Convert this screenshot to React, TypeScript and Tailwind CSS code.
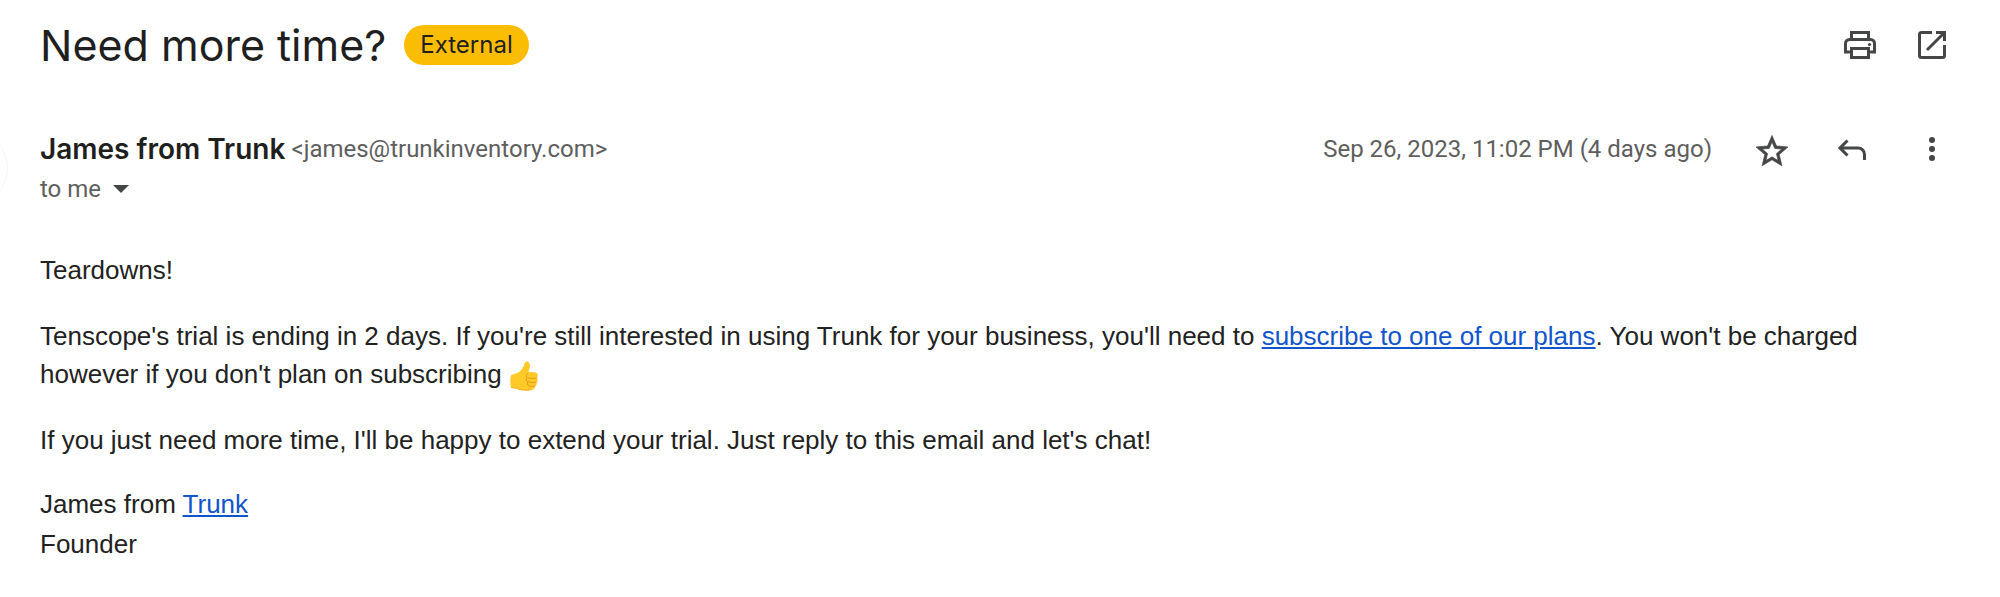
import type { ReactNode } from 'react';

interface IconButtonProps {
  label: string;
  children: ReactNode;
}

function IconButton({ label, children }: IconButtonProps) {
  return (
    <button type="button" aria-label={label} className="size-10 shrink-0 text-[#444746]">
      <svg viewBox="0 0 40 40" className="size-10" fill="none" stroke="currentColor" strokeWidth="3">
        {children}
      </svg>
    </button>
  );
}

function ThumbsUp() {
  return (
    <svg viewBox="0 0 28 30" role="img" aria-label="thumbs up" className="ml-px inline-block h-[30px] w-7 align-[-8px]">
      <path
        d="M1 14.500c2-1.500 4.500-1.500 6.500-2.500 3-1.800 5.500-4.500 6.700-8.200C14.600 1.500 15.500.300 17.200.500c2.300.300 3.100 2.800 2.600 5.400-.400 2.200-1.100 3.700-1.300 5.200l6 .200c2.300.200 3.400 1.500 3.200 3.200-.100.900-.600 1.500-1.100 1.900 1.600 1.300 1.500 3.600-.100 4.700.700 1.600 0 3.400-1.500 4 .300 1.900-.900 3.400-3.300 3.700-3.800.500-8.300.500-11.700-.300-2.500-.600-4.300-1.800-9-1.900C.200 23 .200 17 1 14.500z"
        fill="#ffc928"
      />
      <path
        d="M27 16.500c-.800.800-2.300 1-4.300.9-2.300-.100-4.200.100-4.800-.600M26.400 21c-1.500.8-5.500.9-8-.1M24.900 25c-1.500.6-4.400.600-6.200-.200M17.800 12.500c-1.900 1.200-2 3.200-.600 4.300-1.300 1.200-1 3.200.6 4-1 1.400-.500 3 .8 4"
        fill="none"
        stroke="#e89a1c"
        strokeWidth="1"
        strokeLinecap="round"
      />
      <path d="M1 26.600c4.700.1 6.500 1.300 9 1.900 3.400.8 7.900.8 11.700.3" fill="none" stroke="#f3a81d" strokeWidth="1" />
    </svg>
  );
}

export default function App() {
  return (
    <main className="relative min-h-screen overflow-hidden bg-white pt-[25px] pr-12 pb-6 pl-10 font-['Inter',sans-serif] text-[#1f1f1f]">
      <div className="flex items-center justify-between">
        <div className="flex items-center gap-[18px]">
          <h1 className="text-[43px] leading-10">Need more time?</h1>
          <span className="rounded-full bg-[#fbbc04] px-4 text-2xl leading-10">External</span>
        </div>
        <div className="flex gap-8">
          <IconButton label="Print all">
            <path d="M11.500 14.500v-7h17v7M11.500 27H5.500v-8.500a4 4 0 0 1 4-4h21a4 4 0 0 1 4 4V27h-6M11.500 23.500h17v9h-17z" />
            <circle cx="29.500" cy="19.500" r="1.600" fill="currentColor" stroke="none" />
          </IconButton>
          <IconButton label="In new window">
            <path d="M20 7.500H9.500a2 2 0 0 0-2 2v21a2 2 0 0 0 2 2h21a2 2 0 0 0 2-2V20M24 7.500h8.500V16M32 8 15 25" />
          </IconButton>
        </div>
      </div>

      <header className="mt-16 flex items-start justify-between">
        <div
          className="absolute top-32 -left-[72px] size-20 rounded-full border border-gray-100"
          aria-hidden="true"
        />
        <div>
          <div className="flex items-center gap-1.5 leading-10">
            <span className="text-[28px] font-semibold">James from Trunk</span>
            <span className="font-['Roboto',sans-serif] text-2xl leading-10 text-[#5e5e5e]">
              &lt;james@trunkinventory.com&gt;
            </span>
          </div>
          <button
            type="button"
            className="flex items-center gap-3 font-['Roboto',sans-serif] text-2xl leading-10 text-[#5e5e5e]"
          >
            to me
            <svg viewBox="0 0 16 8" className="h-2 w-4" fill="#444746">
              <path d="M0 0h16L8 8z" />
            </svg>
          </button>
        </div>
        <div className="flex items-center gap-10">
          <span className="font-['Roboto',sans-serif] text-2xl text-[#5e5e5e]">Sep 26, 2023, 11:02 PM (4 days ago)</span>
          <IconButton label="Star">
            <path
              transform="translate(0.8 3.2) scale(1.6)"
              fill="currentColor"
              strokeWidth="0.4"
              d="M22 9.240l-7.190-.62L12 2 9.190 8.630 2 9.240l5.460 4.730L5.820 21 12 17.270 18.180 21l-1.630-7.030L22 9.240zM12 15.400l-3.760 2.270 1-4.280-3.320-2.880 4.380-.38L12 6.100l1.710 4.040 4.380.38-3.320 2.880 1 4.280L12 15.400z"
            />
          </IconButton>
          <IconButton label="Reply">
            <path d="M15.500 11.500 8 19l7.500 7.500M8 19h18a6.500 6.500 0 0 1 6.500 6.500V31" />
          </IconButton>
          <IconButton label="More">
            <g fill="currentColor" stroke="none">
              <circle cx="20" cy="11" r="3" />
              <circle cx="20" cy="20" r="3" />
              <circle cx="20" cy="29" r="3" />
            </g>
          </IconButton>
        </div>
      </header>

      <article className="mt-[42px] font-['Liberation_Sans',Arial,sans-serif] text-[26px] leading-[38px] text-[#222222]">
        <div className="flex flex-col gap-7">
          <p>Teardowns!</p>
          <p>
            Tenscope's trial is ending in 2 days. If you're still interested in using Trunk for your business, you'll
            need to{' '}
            <a href="#plans" className="text-[#1155cc] underline">
              subscribe to one of our plans
            </a>
            . You won't be charged however if you don't plan on subscribing <ThumbsUp />
          </p>
          <p>If you just need more time, I'll be happy to extend your trial. Just reply to this email and let's chat!</p>
        </div>
        <p className="mt-[25px] leading-10">
          James from{' '}
          <a href="#trunk" className="text-[#1155cc] underline">
            Trunk
          </a>
          <br />
          Founder
        </p>
      </article>
    </main>
  );
}
